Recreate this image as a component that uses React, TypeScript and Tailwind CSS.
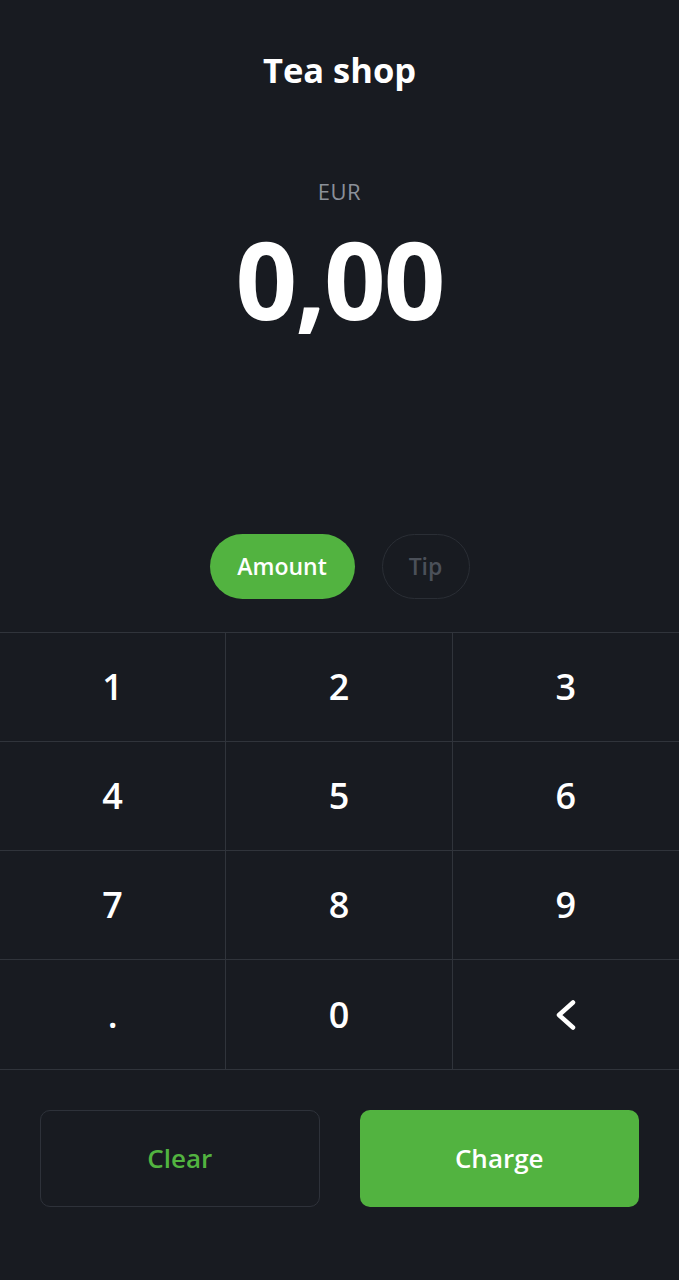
import React, { useState } from 'react';

const keys = ['1', '2', '3', '4', '5', '6', '7', '8', '9', '.', '0', 'back'];

const BackIcon = () => (
  <svg width="22" height="32" viewBox="0 0 22 32" fill="none">
    <path d="M18 3.5 L4 16 L18 28.5" stroke="white" strokeWidth="4.5" strokeLinecap="round" strokeLinejoin="round" />
  </svg>
);

const App = () => {
  const [mode, setMode] = useState<'amount' | 'tip'>('amount');

  return (
    <div className="min-h-screen w-full bg-[#181b21] text-white flex flex-col" style={{ fontFamily: '"Open Sans", sans-serif' }}>
      <header className="h-[141px] flex items-center justify-center">
        <h1 className="text-[34.5px] font-bold leading-none">Tea shop</h1>
      </header>

      <div className="flex flex-col items-center">
        <div className="mt-[35px] text-[22px] leading-[30px] font-medium tracking-[0.5px] text-[#8b9099]">EUR</div>
        <div className="mt-[8px] text-[108px] leading-[130px] font-bold tracking-[-2px]">0,00</div>
      </div>

      {/* amount / tip switch */}
      <div className="mt-[190px] flex justify-center gap-[27px]">
        <button
          onClick={() => setMode('amount')}
          className={
            mode === 'amount'
              ? 'h-[65px] w-[145px] rounded-full bg-[#52b340] text-[23px] font-semibold text-white'
              : 'h-[65px] w-[145px] rounded-full border border-[#2a2e35] text-[23px] font-semibold text-[#4b5059]'
          }
        >
          Amount
        </button>
        <button
          onClick={() => setMode('tip')}
          className={
            mode === 'tip'
              ? 'h-[65px] w-[88px] rounded-full bg-[#52b340] text-[23px] font-semibold text-white'
              : 'h-[65px] w-[88px] rounded-full border border-[#2a2e35] text-[23px] font-semibold text-[#4b5059]'
          }
        >
          Tip
        </button>
      </div>

      {/* keypad */}
      <div className="mt-[33px] grid grid-cols-3 border-t border-b border-[#30343b]">
        {keys.map((k, i) => (
          <button
            key={k}
            className={
              'h-[109px] flex items-center justify-center text-[36px] font-semibold ' +
              (i % 3 !== 2 ? 'border-r border-[#30343b] ' : '') +
              (i < 9 ? 'border-b border-[#30343b]' : '')
            }
          >
            {k === 'back' ? <BackIcon /> : k}
          </button>
        ))}
      </div>

      <div className="mt-[40px] px-[40px] grid grid-cols-2 gap-[40px]">
        <button className="h-[97px] rounded-[10px] border border-[#2e323a] text-[26px] font-semibold text-[#52b340]">
          Clear
        </button>
        <button className="h-[97px] rounded-[10px] bg-[#52b340] text-[26px] font-semibold text-white">
          Charge
        </button>
      </div>
    </div>
  );
};

export default App;
